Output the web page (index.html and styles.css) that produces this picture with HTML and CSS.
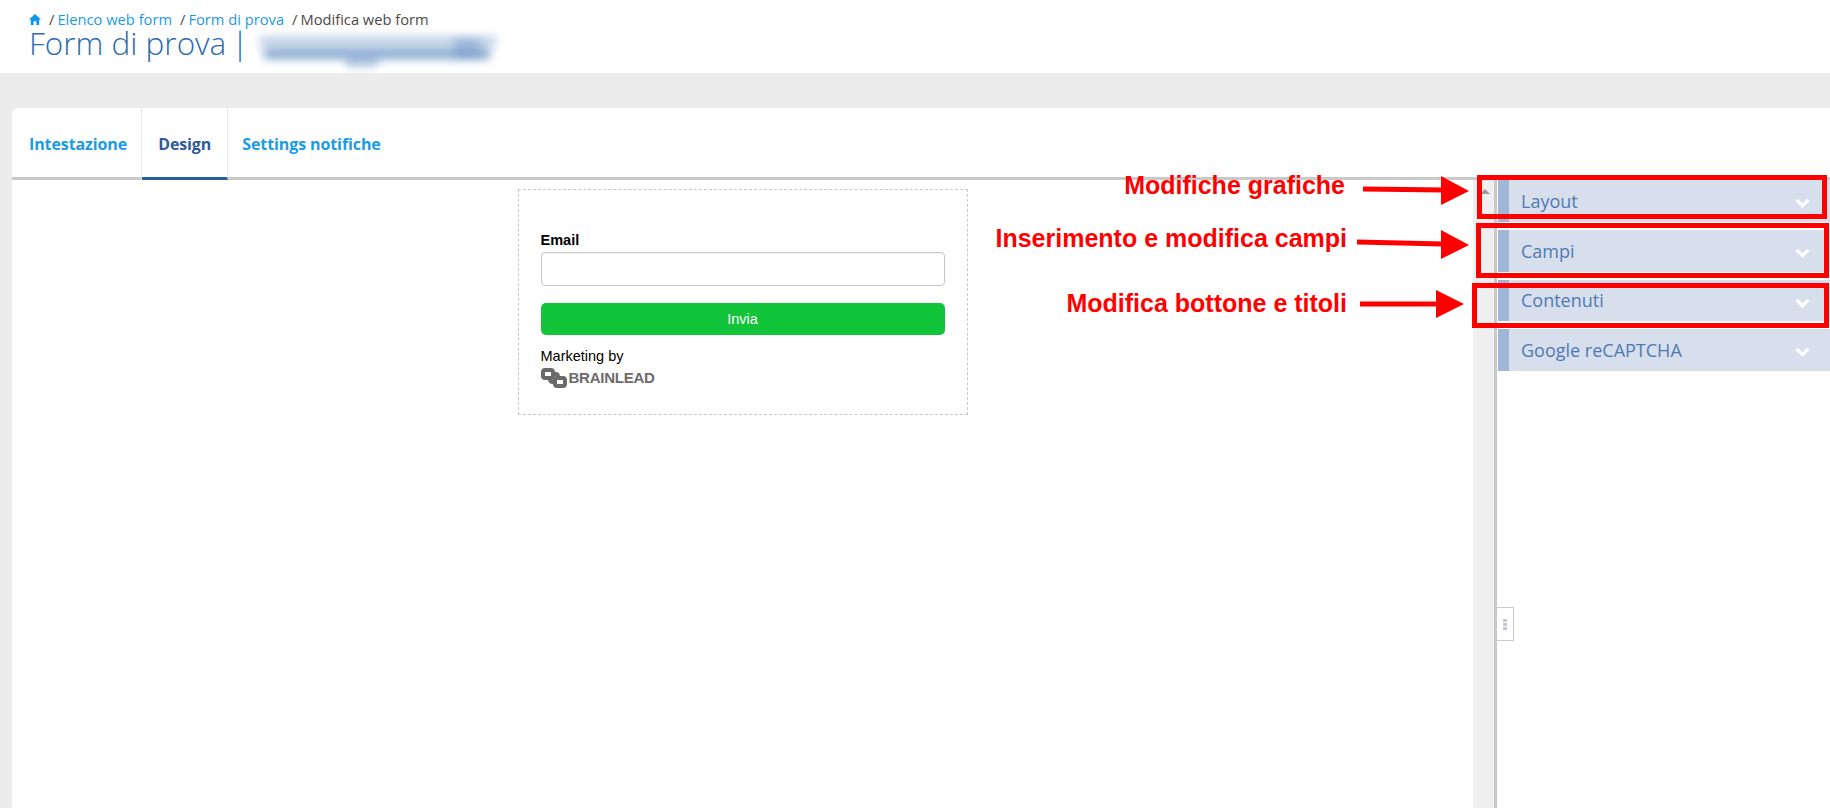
FILE: index.html
```html
<!DOCTYPE html>
<html lang="it">
<head>
<meta charset="utf-8">
<title>Form di prova</title>
<link rel="stylesheet" href="styles.css">
</head>
<body>
<header class="page-head">
  <nav class="crumbs">
    <svg class="home" viewBox="0 0 12 11" aria-hidden="true"><path d="M6 0 L12 5.6 H10.2 V11 H7.4 V7.2 H4.6 V11 H1.8 V5.6 H0 Z"/></svg>
    <span class="sep">/</span><a>Elenco web form</a>
    <span class="sep">/</span><a>Form di prova</a>
    <span class="sep">/</span><span class="current">Modifica web form</span>
  </nav>
  <h1 class="title">Form di prova <span class="bar">|</span></h1>
  <div class="redacted"><i class="smear smear-a"></i><i class="smear smear-b"></i><i class="smear smear-c"></i><i class="smear smear-d"></i></div>
</header>
<main class="stage">
  <section class="card">
    <div class="tabs">
      <a class="tab">Intestazione</a>
      <a class="tab tab-active">Design</a>
      <a class="tab tab-last">Settings notifiche</a>
    </div>
    <div class="workspace">
      <div class="canvas">
        <form class="web-form">
          <label class="field-label">Email</label>
          <div class="field-input"></div>
          <div class="submit">Invia</div>
          <div class="marketing">Marketing by</div>
          <div class="logo">
            <svg class="logo-mark" viewBox="0 0 26 20" aria-hidden="true">
              <rect x="2" y="2" width="10" height="8" rx="2"/>
              <rect x="14" y="10" width="10" height="8" rx="2"/>
              <path d="M10 6 H15 Q17 6 17 9"/>
              <path d="M9 11 Q9 14 12 14 H15"/>
            </svg>
            <span class="logo-text">BRAINLEAD</span>
          </div>
        </form>
      </div>
      <div class="strip"><i class="corner"></i></div>
      <aside class="side">
        <div class="panel"><span>Layout</span><svg class="chev" viewBox="0 0 14 9"><path d="M1.5 1.5 L7 7 L12.5 1.5"/></svg></div>
        <div class="panel"><span>Campi</span><svg class="chev" viewBox="0 0 14 9"><path d="M1.5 1.5 L7 7 L12.5 1.5"/></svg></div>
        <div class="panel panel-short"><span>Contenuti</span><svg class="chev" viewBox="0 0 14 9"><path d="M1.5 1.5 L7 7 L12.5 1.5"/></svg></div>
        <div class="panel"><span>Google reCAPTCHA</span><svg class="chev" viewBox="0 0 14 9"><path d="M1.5 1.5 L7 7 L12.5 1.5"/></svg></div>
        <div class="handle"><i></i><i></i><i></i></div>
      </aside>
    </div>
  </section>
</main>

<div class="note note-1">Modifiche grafiche</div>
<div class="note note-2">Inserimento e modifica campi</div>
<div class="note note-3">Modifica bottone e titoli</div>
<svg class="arrows" viewBox="0 0 1830 808" aria-hidden="true">
  <path class="shaft" d="M1363 189 L1443 190"/>
  <polygon class="head" points="1441,176 1469,191 1441,205"/>
  <path class="shaft" d="M1357 242 L1443 244"/>
  <polygon class="head" points="1441,230 1469,245 1441,259"/>
  <path class="shaft" d="M1360 304 L1438 304"/>
  <polygon class="head" points="1436,290 1464,304 1436,318"/>
</svg>
<div class="box box-1"></div>
<div class="box box-2"></div>
<div class="box box-3"></div>
</body>
</html>
```

FILE: styles.css
```css
* { box-sizing: border-box; }
html, body { margin: 0; height: 100%; }
body {
  display: flex;
  flex-direction: column;
  height: 808px;
  overflow: hidden;
  background: #ececec;
  font-family: "Open Sans", "Liberation Sans", sans-serif;
}

/* Header */
.page-head {
  position: relative;
  height: 73px;
  flex: none;
  background: #fff;
  padding: 9px 0 0 29px;
}
.crumbs {
  display: flex;
  align-items: center;
  height: 20px;
  font-size: 14.7px;
  line-height: 20px;
  color: #1a9be6;
  white-space: nowrap;
}
.home { width: 12px; height: 11px; fill: #0f97e6; margin-right: 8px; }
.sep { color: #4a4a4a; margin-right: 3px; }
.crumbs a { margin-right: 8px; }
.current { color: #4a4a4a; }
.title {
  margin: 1px 0 0;
  font-size: 31.5px;
  line-height: 26px;
  font-weight: 300;
  color: #2b6cb0;
  white-space: nowrap;
}
.bar { margin-left: -3px; }
.redacted {
  position: absolute;
  left: 254px;
  top: 29px;
  width: 249px;
  height: 44px;
  background: #fff;
  overflow: hidden;
}
.smear {
  position: absolute;
  display: block;
  background: #7097c8;
  filter: blur(5px);
}
.smear-a { left: 6px; top: 8px; width: 236px; height: 9px; opacity: .5; }
.smear-b { left: 10px; top: 19px; width: 226px; height: 11px; opacity: .85; }
.smear-c { left: 92px; top: 28px; width: 32px; height: 9px; opacity: .6; }
.smear-d { left: 200px; top: 10px; width: 26px; height: 18px; opacity: .5; }

/* Card */
.stage {
  flex: 1;
  min-height: 0;
  display: flex;
  padding: 35px 0 0 12px;
}
.card {
  flex: 1;
  min-width: 0;
  display: flex;
  flex-direction: column;
  background: #fff;
  border-top-left-radius: 6px;
}
.tabs {
  display: flex;
  flex: none;
  height: 72px;
  border-bottom: 3px solid #c9c9c9;
}
.tab {
  height: 72px;
  padding: 0 14px 0 17px;
  border-right: 1px solid #e9e9e9;
  font-size: 16px;
  font-weight: 700;
  line-height: 72px;
  color: #1a9be6;
  letter-spacing: -.1px;
}
.tab-active {
  color: #2f5a99;
  border-bottom: 3px solid #25609f;
  padding: 0 16px 0 16px;
}
.tab-last { border-right: 0; padding-left: 14px; }

/* Work area */
.workspace { flex: 1; min-height: 0; display: flex; }
.canvas { flex: 1; min-width: 0; padding-top: 9px; }
.web-form {
  width: 450px;
  height: 226px;
  margin: 0 auto;
  padding: 42px 22px 0 22px;
  border: 1px dashed #c8c8c8;
  font-family: "Liberation Sans", Arial, sans-serif;
  font-size: 14.5px;
  color: #000;
}
.field-label {
  display: block;
  height: 20px;
  font-weight: 700;
  line-height: 17px;
}
.field-input {
  height: 34px;
  border: 1px solid #c8c8c8;
  border-radius: 4px;
  box-shadow: inset 0 1px 1px rgba(0, 0, 0, .06);
}
.submit {
  height: 32px;
  margin-top: 17px;
  border-radius: 5px;
  background: #11c439;
  color: #fff;
  text-align: center;
  line-height: 32px;
}
.marketing { margin-top: 12px; line-height: 18px; }
.logo {
  display: flex;
  align-items: center;
  gap: 2px;
  height: 21px;
  margin-top: 2px;
}
.logo-mark {
  width: 26px;
  height: 20px;
  flex: none;
  fill: none;
  stroke: #6a6a6a;
  stroke-width: 4;
}
.logo-text {
  font-size: 15px;
  font-weight: 700;
  color: #6b6b6b;
  letter-spacing: -.25px;
}

.strip {
  position: relative;
  flex: none;
  width: 24px;
  background: #efefef;
  border-right: 3px solid #c9c9c9;
}
.corner {
  position: absolute;
  left: 7px;
  top: 9px;
  border-left: 5px solid transparent;
  border-right: 5px solid transparent;
  border-bottom: 5px solid #9a9a9a;
}
.side {
  position: relative;
  flex: none;
  width: 333px;
  padding-left: 1px;
  display: flex;
  flex-direction: column;
  gap: 8px;
}
.panel {
  display: flex;
  align-items: center;
  justify-content: space-between;
  height: 42px;
  padding: 0 20px 0 12px;
  border-left: 11px solid #a0b6d6;
  background: #d7dfec;
  font-size: 18px;
  color: #4f79b5;
}
.panel-short { height: 41px; }
.panel-short span { margin-top: -2px; }
.chev {
  width: 15px;
  height: 10px;
  margin-top: 4px;
  fill: none;
  stroke: #fff;
  stroke-width: 3;
}
.handle {
  position: absolute;
  left: 0;
  top: 427px;
  width: 17px;
  height: 34px;
  display: flex;
  flex-direction: column;
  align-items: center;
  justify-content: center;
  gap: 1px;
  background: #fff;
  border: 1px solid #ccc;
  border-left: 0;
}
.handle i { width: 4px; height: 3px; background: #c4c8d2; }

/* Annotations drawn over the screenshot */
.note {
  position: absolute;
  font-family: "Liberation Sans", Arial, sans-serif;
  font-weight: 700;
  font-size: 25px;
  line-height: 28px;
  color: #f00;
  white-space: nowrap;
  text-align: right;
}
.note-1 { right: 485px; top: 171px; }
.note-2 { right: 483px; top: 224px; }
.note-3 { right: 483px; top: 289px; }
.arrows { position: absolute; left: 0; top: 0; width: 1830px; height: 808px; pointer-events: none; }
.shaft { stroke: #f00; stroke-width: 5; fill: none; }
.head { fill: #f00; }
.box { position: absolute; border: 5px solid #f00; }
.box-1 { left: 1477px; top: 175px; width: 350px; height: 44px; }
.box-2 { left: 1476px; top: 223px; width: 353px; height: 55px; }
.box-3 { left: 1472px; top: 283px; width: 357px; height: 45px; }
```
